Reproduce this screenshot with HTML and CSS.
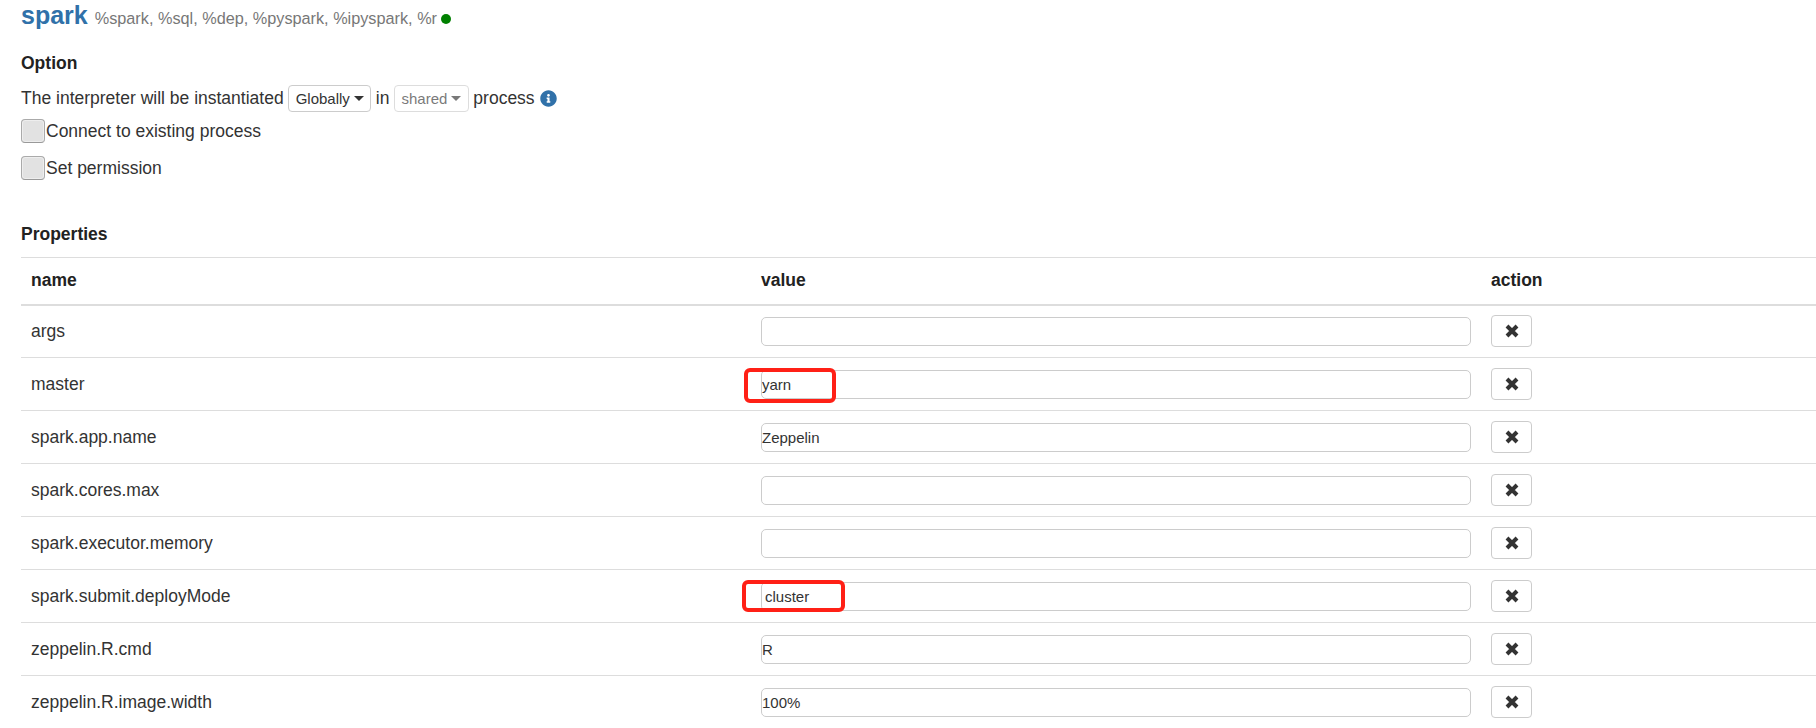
FILE: index.html
```html
<!DOCTYPE html>
<html lang="en">
<head>
<meta charset="utf-8">
<title>spark interpreter</title>
<link rel="stylesheet" href="styles.css">
</head>
<body>
<main class="page">
  <header class="title-row">
    <h3 class="title">spark</h3>
    <small class="bindings">%spark, %sql, %dep, %pyspark, %ipyspark, %r</small>
    <span class="dot"></span>
  </header>
  <h5 class="section option-head">Option</h5>
  <div class="mode-row">
    <span>The interpreter will be instantiated</span>
    <button class="drop">Globally<i class="caret"></i></button>
    <span>in</span>
    <button class="drop disabled">shared<i class="caret"></i></button>
    <span>process</span>
    <svg class="info" viewBox="0 0 512 512"><path d="M256 8C119.043 8 8 119.083 8 256c0 136.997 111.043 248 248 248s248-111.003 248-248C504 119.083 392.957 8 256 8zm0 110c23.196 0 42 18.804 42 42s-18.804 42-42 42-42-18.804-42-42 18.804-42 42-42zm56 254c0 6.627-5.373 12-12 12h-88c-6.627 0-12-5.373-12-12v-24c0-6.627 5.373-12 12-12h12v-64h-12c-6.627 0-12-5.373-12-12v-24c0-6.627 5.373-12 12-12h64c6.627 0 12 5.373 12 12v100h12c6.627 0 12 5.373 12 12v24z"/></svg>
  </div>
  <label class="check first"><span class="box"></span>Connect to existing process</label>
  <label class="check"><span class="box"></span>Set permission</label>
  <h5 class="section props-head">Properties</h5>
  <table class="props">
    <colgroup><col class="c1"><col class="c2"><col class="c3"></colgroup>
    <thead><tr><th>name</th><th>value</th><th>action</th></tr></thead>
    <tbody>
      <tr><td>args</td><td><input type="text" value=""></td><td><button class="rm"><svg viewBox="0 0 14 14"><path d="M2 2L12 12M12 2L2 12"/></svg></button></td></tr>
      <tr><td>master</td><td class="val"><input type="text" value="yarn"><span class="mark mark-a"></span></td><td><button class="rm"><svg viewBox="0 0 14 14"><path d="M2 2L12 12M12 2L2 12"/></svg></button></td></tr>
      <tr><td>spark.app.name</td><td><input type="text" value="Zeppelin"></td><td><button class="rm"><svg viewBox="0 0 14 14"><path d="M2 2L12 12M12 2L2 12"/></svg></button></td></tr>
      <tr><td>spark.cores.max</td><td><input type="text" value=""></td><td><button class="rm"><svg viewBox="0 0 14 14"><path d="M2 2L12 12M12 2L2 12"/></svg></button></td></tr>
      <tr><td>spark.executor.memory</td><td><input type="text" value=""></td><td><button class="rm"><svg viewBox="0 0 14 14"><path d="M2 2L12 12M12 2L2 12"/></svg></button></td></tr>
      <tr><td>spark.submit.deployMode</td><td class="val"><input class="pad" type="text" value="cluster"><span class="mark mark-b"></span></td><td><button class="rm"><svg viewBox="0 0 14 14"><path d="M2 2L12 12M12 2L2 12"/></svg></button></td></tr>
      <tr><td>zeppelin.R.cmd</td><td><input type="text" value="R"></td><td><button class="rm"><svg viewBox="0 0 14 14"><path d="M2 2L12 12M12 2L2 12"/></svg></button></td></tr>
      <tr><td>zeppelin.R.image.width</td><td><input type="text" value="100%"></td><td><button class="rm"><svg viewBox="0 0 14 14"><path d="M2 2L12 12M12 2L2 12"/></svg></button></td></tr>
    </tbody>
  </table>
</main>
</body>
</html>
```
FILE: styles.css
```css
html, body {
  margin: 0;
  height: 728px;
  overflow: hidden;
  background: #fff;
}
.page {
  padding-left: 21px;
  font-family: "Liberation Sans", Arial, sans-serif;
  font-size: 17.5px;
  line-height: 25px;
  color: #333;
}
.title-row {
  display: flex;
  align-items: baseline;
  height: 40px;
}
.title {
  margin: 0;
  font-size: 25px;
  line-height: 31px;
  font-weight: 700;
  color: #3071a9;
}
.bindings {
  margin-left: 7px;
  font-size: 16.25px;
  color: #777;
}
.dot {
  width: 10px;
  height: 10px;
  margin-left: 4px;
  border-radius: 50%;
  background: #008000;
}
.section {
  margin: 0;
  font-size: 17.5px;
  line-height: 22px;
  font-weight: 700;
  color: #222;
}
.option-head { margin-top: 12px; }
.mode-row {
  display: flex;
  align-items: center;
  gap: 4.5px;
  height: 28px;
  margin-top: 10px;
  white-space: nowrap;
}
.drop {
  display: flex;
  align-items: center;
  height: 27px;
  padding: 0 6.5px;
  font: 15px "Liberation Sans", Arial, sans-serif;
  color: #333;
  background: #fff;
  border: 1px solid #ccc;
  border-radius: 4px;
}
.drop.disabled { opacity: .65; }
.caret {
  width: 0;
  height: 0;
  margin-left: 4px;
  border-top: 5px solid currentColor;
  border-left: 5px solid transparent;
  border-right: 5px solid transparent;
}
.info {
  width: 17px;
  height: 17px;
  margin-left: 1px;
  fill: #3071a9;
}
.check {
  display: flex;
  align-items: center;
  height: 24px;
}
.check.first { margin-top: 7px; }
.check + .check { margin-top: 13px; }
.box {
  box-sizing: border-box;
  width: 24px;
  height: 24px;
  margin-right: 1px;
  background: #e2e2e2;
  border: 1px solid #aaa;
  border-bottom-color: #999;
  border-radius: 4px;
  box-shadow: inset 0 0 0 1px #eee;
}
.props-head { margin-top: 43px; }
.props {
  width: 1795px;
  margin-top: 12px;
  table-layout: fixed;
  border-collapse: collapse;
}
.c1, .c2 { width: 730px; }
.props th {
  height: 47px;
  padding: 0 10px;
  box-sizing: border-box;
  text-align: left;
  font-weight: 700;
  color: #222;
  border-top: 1px solid #ddd;
  border-bottom: 2px solid #ddd;
}
.props td {
  height: 53px;
  padding: 0 10px;
  box-sizing: border-box;
  border-top: 1px solid #ddd;
  vertical-align: middle;
}
.props tbody tr:first-child td { border-top: 0; }
.props input {
  display: block;
  box-sizing: border-box;
  width: 710px;
  height: 29px;
  padding: 0;
  font: 15px "Liberation Sans", Arial, sans-serif;
  color: #333;
  background: #fff;
  border: 1px solid #ccc;
  border-radius: 5px;
  outline: 0;
}
.props input.pad { padding-left: 3px; }
.rm {
  display: flex;
  align-items: center;
  justify-content: center;
  box-sizing: border-box;
  width: 41px;
  height: 32px;
  padding: 0;
  background: #fff;
  border: 1px solid #ccc;
  border-radius: 4px;
}
.rm svg {
  width: 14px;
  height: 14px;
  fill: none;
  stroke: #333;
  stroke-width: 4;
}
.val { position: relative; }
.mark {
  position: absolute;
  box-sizing: border-box;
  border: 4px solid #ff2016;
  border-radius: 6px;
  pointer-events: none;
}
.mark-a { left: -7px; top: 10px; width: 92px; height: 35px; }
.mark-b { left: -9px; top: 10px; width: 103px; height: 32px; }
```
